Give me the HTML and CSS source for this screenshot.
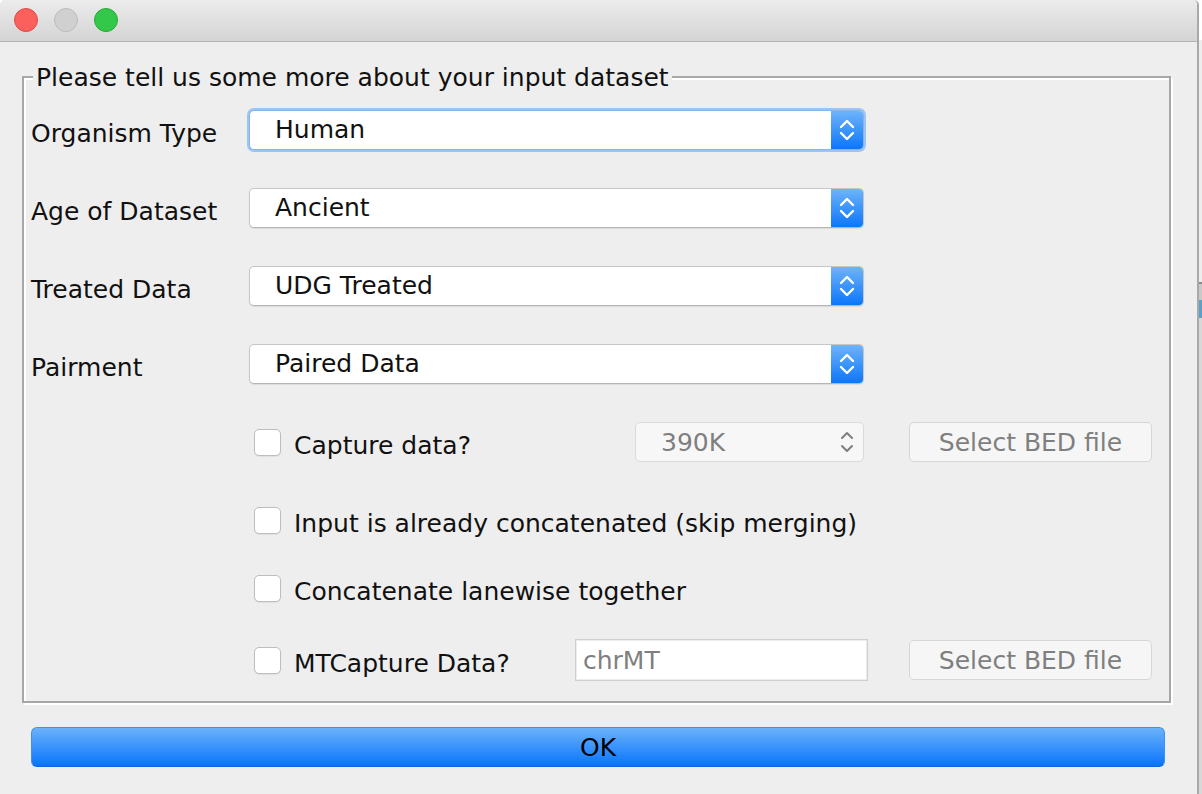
FILE: index.html
```html
<!DOCTYPE html>
<html>
<head>
<meta charset="utf-8">
<link rel="stylesheet" href="styles.css">
</head>
<body>
<div class="screen">
  <div class="window">
    <div class="titlebar">
      <span class="light red"></span>
      <span class="light grey"></span>
      <span class="light green"></span>
    </div>
    <div class="content">
      <div class="panel">
        <span class="legend">Please tell us some more about your input dataset</span>

        <div class="field-row">
          <span class="label">Organism Type</span>
          <div class="combo focused">
            <span class="combo-text">Human</span>
            <span class="combo-btn"><svg class="chev" viewBox="0 0 16 22"><polyline points="2,8 8,2 14,8"/><polyline points="2,14 8,20 14,14"/></svg></span>
          </div>
        </div>

        <div class="field-row">
          <span class="label">Age of Dataset</span>
          <div class="combo">
            <span class="combo-text">Ancient</span>
            <span class="combo-btn"><svg class="chev" viewBox="0 0 16 22"><polyline points="2,8 8,2 14,8"/><polyline points="2,14 8,20 14,14"/></svg></span>
          </div>
        </div>

        <div class="field-row">
          <span class="label">Treated Data</span>
          <div class="combo">
            <span class="combo-text">UDG Treated</span>
            <span class="combo-btn"><svg class="chev" viewBox="0 0 16 22"><polyline points="2,8 8,2 14,8"/><polyline points="2,14 8,20 14,14"/></svg></span>
          </div>
        </div>

        <div class="field-row">
          <span class="label">Pairment</span>
          <div class="combo">
            <span class="combo-text">Paired Data</span>
            <span class="combo-btn"><svg class="chev" viewBox="0 0 16 22"><polyline points="2,8 8,2 14,8"/><polyline points="2,14 8,20 14,14"/></svg></span>
          </div>
        </div>

        <div class="check-row row-capture">
          <span class="check"><span class="box"></span><span class="check-label">Capture data?</span></span>
          <div class="combo-dis">
            <span class="combo-text">390K</span>
            <svg class="chev-dis" viewBox="0 0 16 26"><polyline points="3,9 8,4 13,9"/><polyline points="3,17 8,22 13,17"/></svg>
          </div>
          <span class="btn-dis">Select BED file</span>
        </div>

        <div class="check-row row-concat">
          <span class="check"><span class="box"></span><span class="check-label">Input is already concatenated (skip merging)</span></span>
        </div>

        <div class="check-row row-lane">
          <span class="check"><span class="box"></span><span class="check-label">Concatenate lanewise together</span></span>
        </div>

        <div class="check-row row-mt">
          <span class="check mt"><span class="box"></span><span class="check-label">MTCapture Data?</span></span>
          <div class="textfield">chrMT</div>
          <span class="btn-dis">Select BED file</span>
        </div>
      </div>
      <div class="ok">OK</div>
    </div>
  </div>
  <div class="edge">
    <div class="edge-a"></div>
    <div class="edge-line"></div>
    <div class="edge-b"></div>
    <div class="edge-blue"></div>
    <div class="edge-c"></div>
  </div>
</div>
</body>
</html>
```

FILE: styles.css
```css
* { box-sizing: border-box; }

html, body {
  margin: 0;
  padding: 0;
  background: #ffffff;
}

body {
  font-family: "DejaVu Sans", "Liberation Sans", sans-serif;
  font-size: 25px;
  color: #111;
}

.screen {
  display: flex;
  width: 1202px;
  height: 794px;
  overflow: hidden;
}

.window {
  width: 1199px;
  height: 794px;
  background: #eeeeee;
  border-right: 2px solid #a9a9a9;
  border-top-left-radius: 5px;
  border-top-right-radius: 5px;
  overflow: hidden;
}

.titlebar {
  height: 42px;
  display: flex;
  align-items: center;
  gap: 16px;
  padding-left: 14px;
  padding-bottom: 2px;
  background: linear-gradient(#ececec, #d4d4d4);
  border-bottom: 1px solid #b3b3b3;
}

.light {
  width: 24px;
  height: 24px;
  border-radius: 50%;
  display: block;
}
.light.red { background: #fc605c; border: 1px solid #de4b46; }
.light.grey { background: #d0d0d0; border: 1px solid #bcbcbc; }
.light.green { background: #34c84a; border: 1px solid #28a935; }

.content {
  padding-top: 34px;
}

.panel {
  position: relative;
  margin-left: 22px;
  width: 1149px;
  height: 627px;
  border: 2px solid #a7a7a7;
  box-shadow: 2px 2px 0 #ffffff, inset 2px 2px 0 #ffffff;
  padding: 32px 0 0 7px;
}

.legend {
  position: absolute;
  left: 9px;
  top: -14px;
  padding: 0 3px;
  background: #eeeeee;
  line-height: 28px;
  white-space: nowrap;
}

.field-row {
  display: flex;
  align-items: center;
  height: 40px;
  margin-bottom: 38px;
}

.label {
  width: 218px;
  padding-top: 6px;
  white-space: nowrap;
}

.combo {
  width: 615px;
  height: 40px;
  display: flex;
  align-items: stretch;
  background: #ffffff;
  border: 1px solid #c6c6c6;
  border-bottom-color: #b4b4b4;
  border-radius: 5px;
  box-shadow: 0 1px 1px rgba(0,0,0,0.08);
  overflow: hidden;
}

.combo.focused {
  border-color: #86b3ec;
  box-shadow: 0 0 0 2px #9cc4f4;
}

.combo-text {
  flex: 1;
  display: flex;
  align-items: center;
  padding-left: 25px;
  padding-bottom: 2px;
}

.combo-btn {
  width: 32px;
  display: flex;
  align-items: center;
  justify-content: center;
  background: linear-gradient(#6eb4fb, #0c76fa);
}

.chev {
  width: 16px;
  height: 22px;
  fill: none;
  stroke: #ffffff;
  stroke-width: 2.4;
  stroke-linecap: round;
  stroke-linejoin: round;
}

.check-row {
  display: flex;
  align-items: center;
  padding-left: 223px;
}

.row-capture { margin-top: 5px; height: 40px; }
.row-concat { margin-top: 38px; height: 40px; }
.row-lane { margin-top: 28px; height: 40px; }
.row-mt { margin-top: 31px; height: 42px; }

.check {
  display: flex;
  align-items: center;
  gap: 13px;
  width: 381px;
}
.check.mt { width: 321px; }

.box {
  width: 27px;
  height: 27px;
  border-radius: 5px;
  background: #ffffff;
  border: 1px solid #bdbdbd;
  box-shadow: 0 1px 1px rgba(0,0,0,0.06);
  flex: none;
}

.check-label {
  white-space: nowrap;
  padding-top: 7px;
}

.combo-dis {
  width: 229px;
  height: 40px;
  display: flex;
  align-items: center;
  background: #f7f7f7;
  border: 1px solid #dadada;
  border-radius: 5px;
  color: #7f7f7f;
  padding-right: 8px;
}
.combo-dis .combo-text { padding-left: 25px; padding-bottom: 0; }

.chev-dis {
  width: 16px;
  height: 26px;
  fill: none;
  stroke: #7f7f7f;
  stroke-width: 2;
  stroke-linecap: round;
  stroke-linejoin: round;
}

.btn-dis {
  margin-left: 45px;
  width: 243px;
  height: 40px;
  display: flex;
  align-items: center;
  justify-content: center;
  background: #f6f6f6;
  border: 1px solid #d6d6d6;
  border-radius: 5px;
  color: #7f7f7f;
  white-space: nowrap;
}

.row-mt .btn-dis { margin-left: 41px; }

.textfield {
  width: 293px;
  height: 42px;
  background: #ffffff;
  border: 1px solid #cfcfcf;
  box-shadow: inset 0 0 0 1px #ececec;
  color: #7f7f7f;
  display: flex;
  align-items: center;
  padding-left: 7px;
}

.ok {
  margin: 24px 0 0 31px;
  width: 1134px;
  height: 40px;
  border-radius: 6px;
  background: linear-gradient(#6cb2fb, #0874fb);
  border: 1px solid #3d8ff2;
  border-bottom-color: #0a64e6;
  display: flex;
  align-items: center;
  justify-content: center;
  color: #000;
}

.edge {
  flex: 1;
  display: flex;
  flex-direction: column;
}
.edge-a { height: 282px; background: linear-gradient(#ffffff 0, #ffffff 40px, #ededed 40px); }
.edge-line { height: 2px; background: #8a8a8a; }
.edge-b { height: 16px; background: #c9c9c9; }
.edge-blue { height: 18px; background: #5aa0c8; }
.edge-c { flex: 1; background: #d8d8d8; }
```
